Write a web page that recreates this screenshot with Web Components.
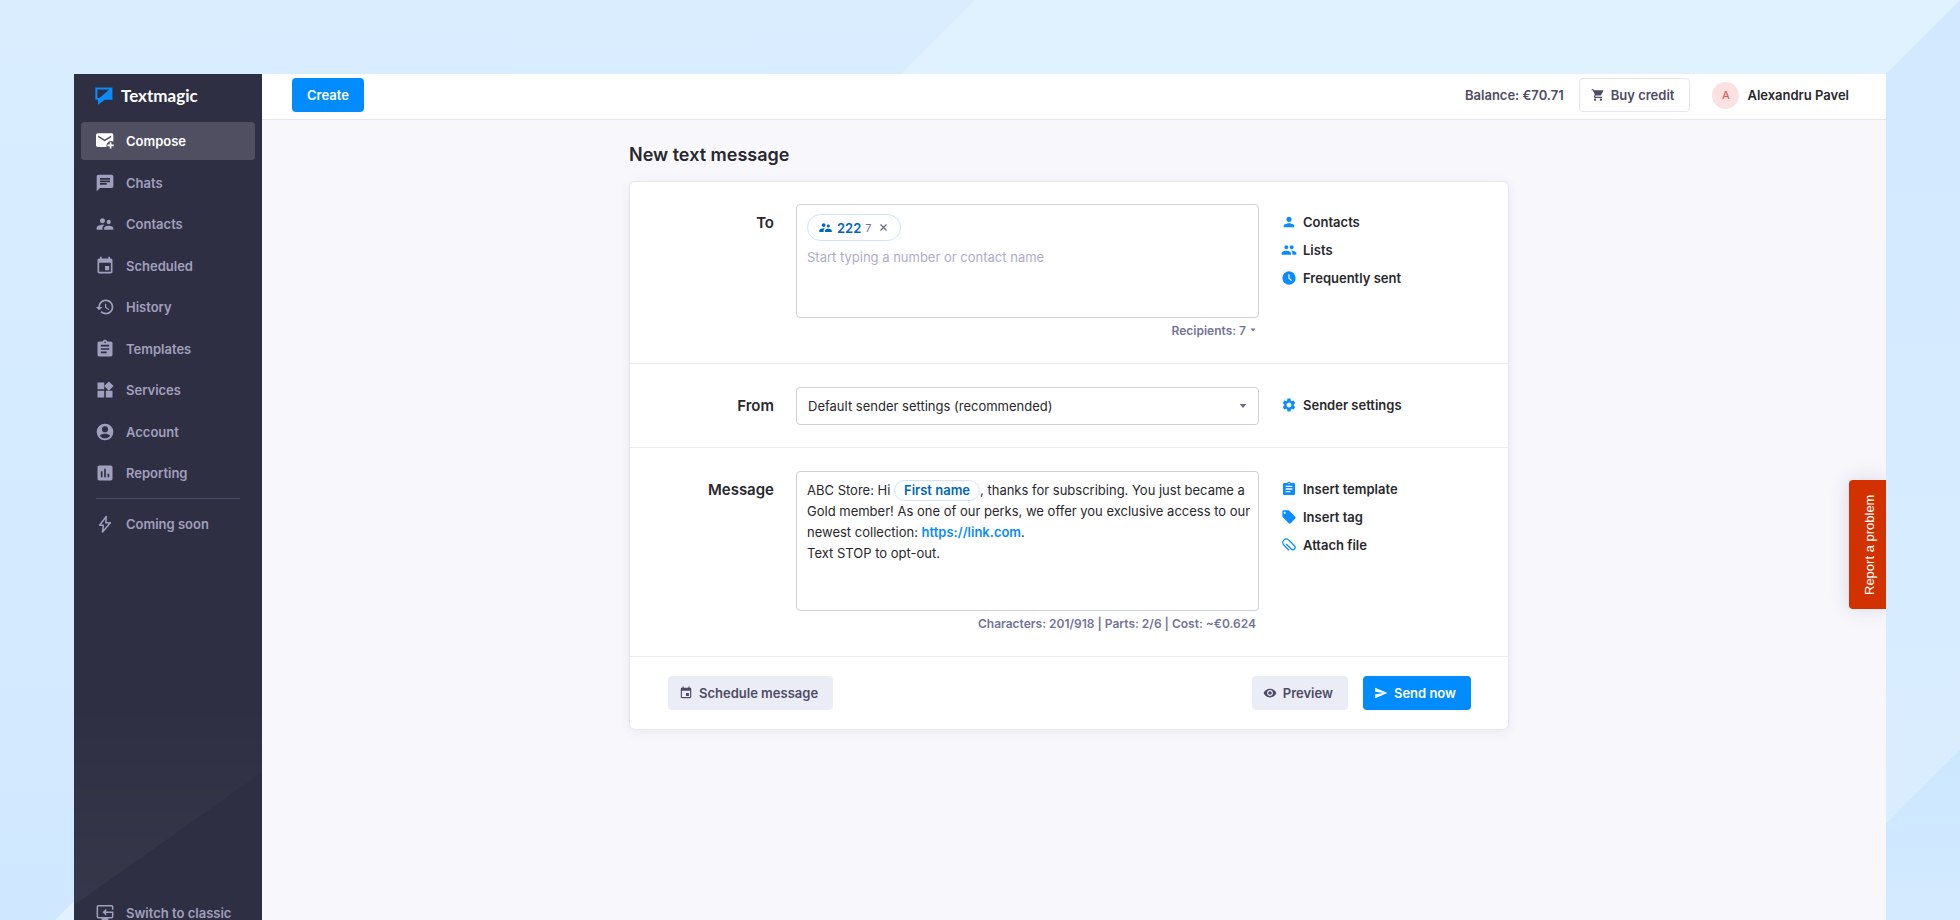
<!DOCTYPE html>
<html lang="en">
<head>
<meta charset="utf-8">
<title>New text message</title>
<style>
html, body { margin: 0; height: 100%; overflow: hidden; }
body { font-family: Inter, "Liberation Sans", sans-serif; font-size: 13px; color: #28282d; }
</style>
</head>
<body>
<tm-app></tm-app>
<script>
const ICONS = {
  compose: '<path fill-rule="evenodd" d="M3.200 2.800h16.800a2 2 0 0 1 2 2v7.700a6 6 0 0 0-8.300 6.700H3.200a2 2 0 0 1-2-2V4.800a2 2 0 0 1 2-2zM3.800 5.500v2l7.800 4.800 7.800-4.800v-2l-7.800 4.800z"/><path d="M17.700 13.500h2v2.800h2.800v2h-2.800v2.800h-2v-2.800h-2.800v-2h2.800z"/>',
  chat: '<path d="M20 2H4c-1.100 0-1.990.9-1.990 2L2 22l4-4h14c1.100 0 2-.9 2-2V4c0-1.100-.9-2-2-2zM6 9h12v2H6V9zm8 5H6v-2h8v2zm4-6H6V6h12v2z"/>',
  people: '<path d="M16.500 12c1.380 0 2.490-1.120 2.490-2.500S17.880 7 16.500 7C15.120 7 14 8.120 14 9.500s1.120 2.500 2.500 2.500zM9 11c1.660 0 2.990-1.340 2.990-3S10.660 5 9 5C7.340 5 6 6.340 6 8s1.340 3 3 3zm7.500 3c-1.830 0-5.500.92-5.500 2.750V19h11v-2.250c0-1.830-3.670-2.750-5.500-2.750zM9 13c-2.330 0-7 1.170-7 3.500V19h7v-2.250c0-.85.33-2.340 2.370-3.470C10.500 13.100 9.660 13 9 13z"/>',
  event: '<path d="M17 12h-5v5h5v-5zM16 1v2H8V1H6v2H5c-1.110 0-1.990.9-1.990 2L3 19c0 1.100.89 2 2 2h14c1.100 0 2-.9 2-2V5c0-1.100-.9-2-2-2h-1V1h-2zm3 18H5V8h14v11z"/>',
  history: '<path d="M13 3c-4.970 0-9 4.030-9 9H1l3.890 3.890.07.14L9 12H6c0-3.870 3.130-7 7-7s7 3.130 7 7-3.130 7-7 7c-1.930 0-3.680-.79-4.940-2.060l-1.420 1.420C8.270 19.990 10.510 21 13 21c4.970 0 9-4.030 9-9s-4.030-9-9-9zm-1 5v5l4.280 2.540.72-1.210-3.500-2.080V8H12z"/>',
  template: '<path d="M19 3h-4.180C14.400 1.840 13.300 1 12 1c-1.300 0-2.400.84-2.820 2H5c-1.100 0-2 .9-2 2v14c0 1.100.9 2 2 2h14c1.100 0 2-.9 2-2V5c0-1.100-.9-2-2-2zm-7 0c.55 0 1 .45 1 1s-.45 1-1 1-1-.45-1-1 .45-1 1-1zm2 14H7v-2h7v2zm3-4H7v-2h10v2zm0-4H7V7h10v2z"/>',
  widgets: '<path d="M13 13v8h8v-8h-8zM3 21h8v-8H3v8zM3 3v8h8V3H3zm13.660-1.310L11 7.340 16.660 13l5.660-5.660-5.660-5.650z"/>',
  account: '<path fill-rule="evenodd" d="M12 2a10 10 0 1 0 0 20 10 10 0 0 0 0-20zm0 3a3.700 3.700 0 1 1 0 7.400A3.700 3.700 0 0 1 12 5zm0 14.600c-2.500 0-4.800-1.200-6.200-3.100 1.200-1.600 4.200-2.300 6.200-2.300s5 .7 6.200 2.300c-1.400 1.900-3.700 3.100-6.200 3.100z"/>',
  chart: '<path d="M19 3H5c-1.100 0-2 .9-2 2v14c0 1.100.9 2 2 2h14c1.100 0 2-.9 2-2V5c0-1.100-.9-2-2-2zM9 17H7v-7h2v7zm4 0h-2V7h2v10zm4 0h-2v-4h2v4z"/>',
  bolt: '<path d="M13.500 3 5.500 13.500h4.500L9 21.500l9.500-11H13z" fill="none" stroke="currentColor" stroke-width="1.800" stroke-linejoin="round"/>',
  classic: '<path d="M21.200 8V4.500a1.300 1.300 0 0 0-1.300-1.300H4.100a1.300 1.300 0 0 0-1.300 1.300v12a1.300 1.300 0 0 0 1.300 1.300h15.800a1.300 1.300 0 0 0 1.300-1.300v-5.500H12" fill="none" stroke="currentColor" stroke-width="1.800"/><path d="M13.500 6.800v8.400L9 11zM8 18h8v3H8z"/>',
  cart: '<path d="M7 18c-1.100 0-1.990.9-1.990 2S5.900 22 7 22s2-.9 2-2-.9-2-2-2zM1 2v2h2l3.600 7.590-1.350 2.450c-.16.28-.25.61-.25.96 0 1.100.9 2 2 2h12v-2H7.420c-.14 0-.25-.11-.25-.25l.03-.12.9-1.630h7.450c.75 0 1.410-.41 1.750-1.030l3.580-6.490c.08-.14.12-.31.12-.48 0-.55-.45-1-1-1H5.210l-.94-2H1zm16 16c-1.100 0-1.990.9-1.990 2s.89 2 1.990 2 2-.9 2-2-.9-2-2-2z"/>',
  person: '<path d="M12 12c2.210 0 4-1.790 4-4s-1.790-4-4-4-4 1.790-4 4 1.790 4 4 4zm0 2c-2.670 0-8 1.340-8 4v2h16v-2c0-2.660-5.330-4-8-4z"/>',
  group: '<path d="M16 11c1.660 0 2.990-1.340 2.990-3S17.660 5 16 5c-1.660 0-3 1.340-3 3s1.340 3 3 3zm-8 0c1.660 0 2.990-1.340 2.990-3S9.660 5 8 5C6.340 5 5 6.340 5 8s1.340 3 3 3zm0 2c-2.330 0-7 1.170-7 3.500V19h14v-2.500c0-2.330-4.670-3.500-7-3.500zm8 0c-.29 0-.62.02-.97.05 1.160.84 1.970 1.970 1.970 3.450V19h6v-2.500c0-2.330-4.670-3.500-7-3.500z"/>',
  clock: '<path fill-rule="evenodd" d="M12 2a10 10 0 1 0 0 20 10 10 0 0 0 0-20zm-.9 4.500h1.700v5.400l3.800 3.300-1.100 1.300-4.400-3.800z"/>',
  gear: '<path d="M19.140 12.940c.04-.3.06-.61.06-.94 0-.32-.02-.64-.07-.94l2.030-1.580c.18-.14.23-.41.12-.61l-1.920-3.320c-.12-.22-.37-.29-.59-.22l-2.390.96c-.5-.38-1.030-.7-1.620-.94l-.36-2.540c-.04-.24-.24-.41-.48-.41h-3.840c-.24 0-.43.17-.47.41l-.36 2.540c-.59.24-1.130.57-1.620.94l-2.390-.96c-.22-.08-.47 0-.59.22L2.740 8.870c-.12.21-.08.47.12.61l2.030 1.580c-.05.3-.09.63-.09.94s.02.64.07.94l-2.030 1.580c-.18.14-.23.41-.12.61l1.920 3.320c.12.22.37.29.59.22l2.390-.96c.5.38 1.030.7 1.620.94l.36 2.540c.05.24.24.41.48.41h3.840c.24 0 .44-.17.47-.41l.36-2.540c.59-.24 1.130-.56 1.620-.94l2.390.96c.22.08.47 0 .59-.22l1.920-3.320c.12-.22.07-.47-.12-.61l-2.010-1.580zM12 15.600c-1.980 0-3.600-1.620-3.600-3.600s1.620-3.600 3.600-3.600 3.600 1.620 3.600 3.600-1.620 3.600-3.600 3.600z"/>',
  tag: '<path d="M21.410 11.580l-9-9C12.050 2.220 11.550 2 11 2H4c-1.100 0-2 .9-2 2v7c0 .55.22 1.050.59 1.420l9 9c.36.36.86.58 1.410.58.55 0 1.050-.22 1.410-.59l7-7c.37-.36.59-.86.59-1.410 0-.55-.23-1.060-.59-1.420zM5.500 7C4.670 7 4 6.330 4 5.500S4.670 4 5.500 4 7 4.670 7 5.500 6.330 7 5.500 7z"/>',
  clip: '<path transform="rotate(-45 12 12)" d="M6.500 17.500V6.500a5.200 5.200 0 0 1 10.400 0v12a3.400 3.400 0 0 1-6.800 0V8" fill="none" stroke="currentColor" stroke-width="1.900"/>',
  eye: '<path d="M12 4.500C7 4.500 2.730 7.610 1 12c1.730 4.390 6 7.500 11 7.500s9.270-3.110 11-7.500c-1.730-4.390-6-7.500-11-7.500zM12 17c-2.760 0-5-2.240-5-5s2.240-5 5-5 5 2.240 5 5-2.240 5-5 5zm0-8c-1.660 0-3 1.340-3 3s1.340 3 3 3 3-1.340 3-3-1.340-3-3-3z"/>',
  send: '<path d="M2.010 21L23 12 2.010 3 2 10l15 2-15 2z"/>',
  close: '<path d="M4 4l16 16M20 4 4 20" fill="none" stroke="currentColor" stroke-width="3"/>',
  caret: '<path d="M2 6h20L12 18z"/>',
  logo: '<path fill="#0a8cff" fill-rule="evenodd" d="M.5.500H23.200V17H13L4 23.700V17H.500zM3.200 3.200v11.300h2.800L19.200 3.200z"/>'
};

function define(name, html) {
  const template = document.createElement('template');
  template.innerHTML = html;
  customElements.define(name, class extends HTMLElement {
    constructor() {
      super();
      this.attachShadow({ mode: 'open' }).append(template.content.cloneNode(true));
    }
  });
}

customElements.define('tm-icon', class extends HTMLElement {
  constructor() { super(); this.attachShadow({ mode: 'open' }); }
  connectedCallback() {
    this.shadowRoot.innerHTML = `<style>
      :host { display: inline-block; flex: none; width: var(--icon-size, 16px); height: var(--icon-size, 16px); }
      svg { display: block; width: 100%; height: 100%; fill: currentColor; }
    </style><svg viewBox="0 0 24 24" aria-hidden="true">${ICONS[this.getAttribute('name')]}</svg>`;
  }
});

customElements.define('tm-nav-item', class extends HTMLElement {
  constructor() { super(); this.attachShadow({ mode: 'open' }); }
  connectedCallback() {
    this.shadowRoot.innerHTML = `<style>
      :host { display: block; }
      a { display: flex; align-items: center; gap: 11px; height: 38px; padding: 0 14px; border-radius: 4px;
          color: #a09fbd; font-weight: 600; text-decoration: none; --icon-size: 20px; }
      :host([active]) a { background: #504f61; color: #fff; }
    </style><a href="#"><tm-icon name="${this.getAttribute('icon')}"></tm-icon><slot></slot></a>`;
  }
});

define('tm-sidebar', `<style>
  :host { display: flex; flex-direction: column; box-sizing: border-box; width: 188px; flex: none; padding: 0 7px;
    background: #2f2f43; position: relative; }
  .shade { position: absolute; inset: auto 0 0 0; width: 100%; height: 230px; }
  .logo { display: flex; align-items: center; gap: 8px; height: 44px; margin: 0 0 4px 14px; color: #fff;
    font: 700 17px/20px Lato, "Open Sans", sans-serif; text-decoration: none; --icon-size: 18px; }
  nav { display: flex; flex-direction: column; justify-content: space-between; height: 370px; position: relative; }
  hr { width: 144px; height: 1px; border: 0; margin: 6px 0 6px 15px; background: #4a4a69; }
  .bottom { margin-top: auto; position: relative; }
</style>
<svg class="shade" viewBox="0 0 188 230" preserveAspectRatio="none" aria-hidden="true">
  <defs><linearGradient id="g" x1="0" y1="0" x2="0" y2="1"><stop offset="0" stop-color="#fff" stop-opacity="0"/><stop offset="1" stop-color="#fff" stop-opacity=".04"/></linearGradient></defs>
  <path d="M0 0h188v70L0 203z" fill="url(#g)"/>
</svg>
<a class="logo" href="#"><tm-icon name="logo"></tm-icon><span>Textmagic</span></a>
<nav>
  <tm-nav-item icon="compose" active>Compose</tm-nav-item>
  <tm-nav-item icon="chat">Chats</tm-nav-item>
  <tm-nav-item icon="people">Contacts</tm-nav-item>
  <tm-nav-item icon="event">Scheduled</tm-nav-item>
  <tm-nav-item icon="history">History</tm-nav-item>
  <tm-nav-item icon="template">Templates</tm-nav-item>
  <tm-nav-item icon="widgets">Services</tm-nav-item>
  <tm-nav-item icon="account">Account</tm-nav-item>
  <tm-nav-item icon="chart">Reporting</tm-nav-item>
</nav>
<hr>
<tm-nav-item icon="bolt">Coming soon</tm-nav-item>
<tm-nav-item class="bottom" icon="classic">Switch to classic</tm-nav-item>`);

customElements.define('tm-button', class extends HTMLElement {
  constructor() { super(); this.attachShadow({ mode: 'open' }); }
  connectedCallback() {
    const icon = this.getAttribute('icon');
    this.shadowRoot.innerHTML = `<style>
      :host { display: inline-block; }
      button { display: flex; align-items: center; gap: 6px; box-sizing: border-box; height: 34px; padding: 0 15px 0 11px;
        font: inherit; font-weight: 600; border: 0; border-radius: 4px; background: #ebedf6; color: #4f4b66; --icon-size: 14px; }
      :host([kind=primary]) button { background: #008bff; color: #fff; }
      :host([kind=outline]) button { background: #fff; border: 1px solid #e5e4f0; }
      button.plain { padding: 0 15px; }
    </style><button type="button" class="${icon ? '' : 'plain'}">${icon ? `<tm-icon name="${icon}"></tm-icon>` : ''}<slot></slot></button>`;
  }
});

define('tm-header', `<style>
  :host { display: flex; align-items: center; box-sizing: border-box; height: 46px; padding: 0 37px 3px 30px; background: #fff; border-bottom: 1px solid #e7e6f0; }
  .balance { margin-left: auto; margin-right: 15px; color: #4f4b66; font-weight: 600; }
  .user { display: flex; align-items: center; gap: 8px; margin-left: 22px; color: #28282d; font-weight: 600; text-decoration: none; }
  .avatar { display: grid; place-items: center; width: 27px; height: 27px; border-radius: 50%; background: #fbe1e1; color: #dc5f5f; font-size: 11px; font-weight: 500; }
</style>
<tm-button kind="primary">Create</tm-button>
<span class="balance">Balance: €70.71</span>
<tm-button kind="outline" icon="cart">Buy credit</tm-button>
<a class="user" href="#"><span class="avatar">A</span><span>Alexandru Pavel</span></a>`);

customElements.define('tm-link', class extends HTMLElement {
  constructor() { super(); this.attachShadow({ mode: 'open' }); }
  connectedCallback() {
    this.shadowRoot.innerHTML = `<style>
      :host { display: block; }
      a { display: flex; align-items: center; gap: 6px; height: 28px; color: #28282d; font-weight: 600; text-decoration: none; }
      tm-icon { color: #0a8cff; }
    </style><a href="#"><tm-icon name="${this.getAttribute('icon')}"></tm-icon><slot></slot></a>`;
  }
});

define('tm-compose', `<style>
  :host { display: block; width: 100%; max-width: 880px; }
  h1 { margin: 0 0 15px; font-size: 18px; line-height: 22px; font-weight: 600; color: #28282d; }
  form { background: #fff; box-sizing: border-box; border: 1px solid #e7e6f0; border-radius: 6px; box-shadow: 0 2px 12px rgba(60, 55, 110, .07); }
  .row { display: grid; grid-template-columns: 144px minmax(0, 463px) minmax(0, 1fr); column-gap: 22px; padding: 23px 22px 22px 0; border-bottom: 1px solid #ececf4; }
  .row.tall { padding-bottom: 23px; }
  .row:first-child { padding-top: 22px; }
  .label { justify-self: end; padding-top: 10px; font-size: 15px; line-height: 18px; font-weight: 600; }
  .links { padding-top: 4px; }
  .box { box-sizing: border-box; border: 1px solid #d0cfe0; border-radius: 4px; background: #fff; width: 100%; }
  .to { height: 114px; padding: 9px 10px; }
  .chip { display: inline-flex; align-items: center; box-sizing: border-box; border: 1px solid #cfe3f5; border-radius: 14px; color: #0067b8; font-weight: 600; background: #fff; }
  .group { height: 27px; padding: 0 12px 0 10px; gap: 4px; --icon-size: 15px; }
  .group small { font-size: 11px; font-weight: 400; color: #76749a; }
  .group button { display: flex; border: 0; padding: 0; margin-left: 3px; background: none; color: #5f5d80; --icon-size: 9px; }
  .to textarea { display: block; box-sizing: border-box; width: 100%; height: 48px; margin: 6px 0 0; padding: 0; border: 0; outline: 0; resize: none; font: inherit; line-height: 20px; color: inherit; background: none; }
  textarea::placeholder { color: #aeadca; }
  .meta { display: flex; justify-content: flex-end; align-items: center; margin: 2px 3px 0 0; height: 20px; font-size: 12px; font-weight: 600; color: #74739a; }
  .meta button { display: flex; align-items: center; gap: 4px; border: 0; padding: 0; background: none; font: inherit; color: inherit; --icon-size: 6px; }
  .pick { display: grid; align-items: center; }
  .pick > * { grid-area: 1 / 1; }
  .pick tm-icon { justify-self: end; margin-right: 12px; color: #6b6990; --icon-size: 8px; pointer-events: none; }
  select { height: 38px; padding: 0 11px; appearance: none; font: inherit; color: inherit; }
  .msg { height: 140px; padding: 8px 6px 8px 10px; line-height: 21px; outline: 0; }
  .msg p { margin: 0; }
  .msg a { color: #0a8cff; font-weight: 600; text-decoration: none; }
  .tag { height: 21px; padding: 0 9px; line-height: 19px; vertical-align: top; }
  footer { display: flex; gap: 15px; padding: 19px 37px 19px 38px; }
  footer :first-child { margin-right: auto; }
</style>
<h1>New text message</h1>
<form>
  <div class="row tall">
    <label class="label" for="to">To</label>
    <div>
      <div class="box to">
        <span class="chip group"><tm-icon name="people"></tm-icon><span>222</span><small>7</small><button type="button" aria-label="Remove"><tm-icon name="close"></tm-icon></button></span>
        <textarea id="to" placeholder="Start typing a number or contact name"></textarea>
      </div>
      <div class="meta"><button type="button">Recipients: 7 <tm-icon name="caret"></tm-icon></button></div>
    </div>
    <div class="links"><tm-link icon="person">Contacts</tm-link><tm-link icon="group">Lists</tm-link><tm-link icon="clock">Frequently sent</tm-link></div>
  </div>
  <div class="row">
    <label class="label" for="from">From</label>
    <div class="pick"><select class="box" id="from"><option>Default sender settings (recommended)</option></select><tm-icon name="caret"></tm-icon></div>
    <div class="links"><tm-link icon="gear">Sender settings</tm-link></div>
  </div>
  <div class="row tall">
    <span class="label" id="message">Message</span>
    <div>
      <div class="box msg" role="textbox" aria-multiline="true" aria-labelledby="message" contenteditable="true" spellcheck="false"><p>ABC Store: Hi <span class="chip tag">First name</span>, thanks for subscribing. You just became a Gold member! As one of our perks, we offer you exclusive access to our newest collection: <a href="https://link.com">https://link.com</a>.</p><p>Text STOP to opt-out.</p></div>
      <div class="meta">Characters: 201/918 | Parts: 2/6 | Cost: ~€0.624</div>
    </div>
    <div class="links"><tm-link icon="template">Insert template</tm-link><tm-link icon="tag">Insert tag</tm-link><tm-link icon="clip">Attach file</tm-link></div>
  </div>
  <footer>
    <tm-button icon="event">Schedule message</tm-button>
    <tm-button icon="eye">Preview</tm-button>
    <tm-button icon="send" kind="primary">Send now</tm-button>
  </footer>
</form>`);

define('tm-report', `<style>
  :host { position: absolute; right: 0; top: 406px; }
  button { display: block; box-sizing: border-box; width: 37px; height: 129px; padding: 0 4px 0 0; border: 0; border-radius: 0 4px 4px 0; background: #d23200; color: #fff;
    font: 13px "Liberation Sans", Arial, sans-serif; writing-mode: vertical-rl; transform: rotate(180deg); box-shadow: 0 0 20px rgba(60, 55, 110, .16); text-align: center; }
</style><button type="button">Report a problem</button>`);

define('tm-app', `<style>
  :host { display: block; position: relative; box-sizing: border-box; height: 100vh; padding: 74px 74px 0; overflow: hidden; background: #d4eaff; }
  .facets { position: absolute; inset: 0; width: 100%; height: 100%; }
  .window { display: flex; position: relative; height: calc(100vh - 62px); overflow: hidden; background: #f7f7fc; }
  .page { display: flex; flex-direction: column; flex: 1; min-width: 0; }
  main { display: flex; justify-content: center; padding: 24px 10px 24px 0; }
</style>
<svg class="facets" viewBox="0 0 1960 920" preserveAspectRatio="none" aria-hidden="true">
  <defs>
    <linearGradient id="a" x1="0" y1="0" x2="0" y2="1"><stop offset="0" stop-color="#d9edff"/><stop offset="1" stop-color="#d0e8ff"/></linearGradient>
    <linearGradient id="b" x1="0" y1="0" x2="0" y2="1"><stop offset="0" stop-color="#d1e8ff"/><stop offset="1" stop-color="#dbeeff"/></linearGradient>
    <linearGradient id="c" x1="0" y1="0" x2="0" y2="1"><stop offset="0" stop-color="#cbe7ff"/><stop offset="1" stop-color="#d4eaff"/></linearGradient>
  </defs>
  <path d="M0 0h1960v920H0z" fill="url(#a)"/>
  <path d="M975 0h985L1040 920H55z" fill="#e0f1ff"/>
  <path d="M1960 0v750l-170 170H1040z" fill="url(#b)"/>
  <path d="M1960 750v170h-170z" fill="url(#c)"/>
</svg>
<div class="window">
  <tm-sidebar></tm-sidebar>
  <div class="page"><tm-header></tm-header><main><tm-compose></tm-compose></main></div>
  <tm-report></tm-report>
</div>`);
</script>
</body>
</html>
